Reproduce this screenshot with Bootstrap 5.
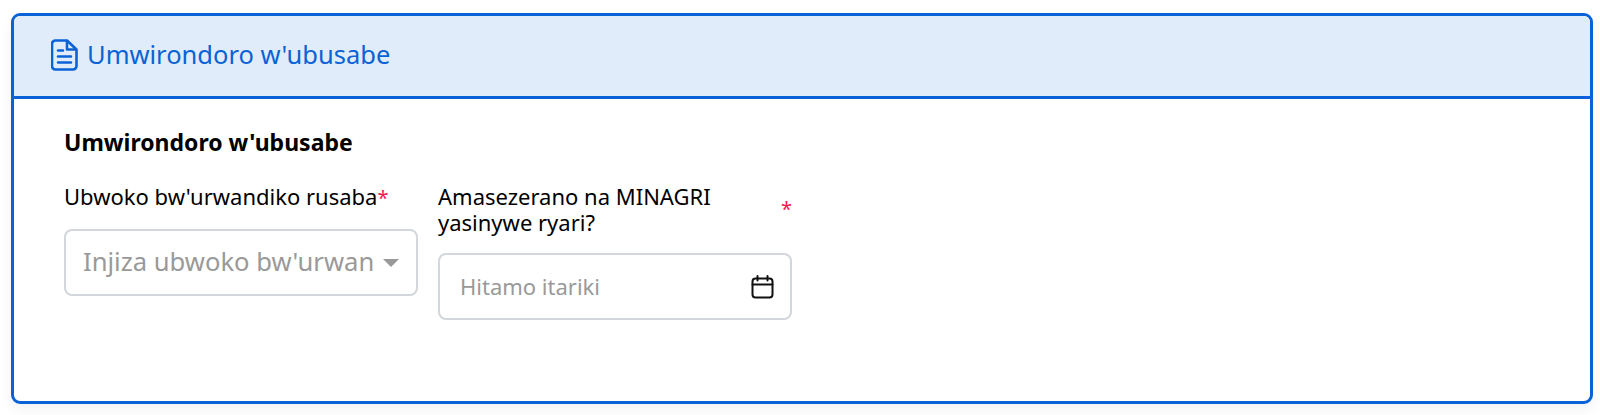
<!DOCTYPE html>
<html lang="en">
<head>
  <meta charset="UTF-8">
  <title>Umwirondoro w'ubusabe</title>
  <link href="https://cdn.jsdelivr.net/npm/bootstrap@5.3.0/dist/css/bootstrap.min.css" rel="stylesheet">
  <style>
    body { background: #fff; font-family: "Noto Sans", "Open Sans", sans-serif; color: #000; overflow: hidden; }
    .page-wrap { padding: 13px 7px 11px 11px; height: 415px; }
    .app-panel { height: 100%; border: 3px solid #0a63d6; border-radius: 9px; overflow: hidden; box-shadow: 0 6px 14px rgba(0,0,0,.05); }
    .app-panel-head { height: 83px; padding: 0 0 3px 37px; background: #e0ecf9; border-bottom: 3px solid #0a63d6; color: #0a63d6; font-size: 25.5px; gap: 9px; }
    .app-panel-body { padding: 28px 50px; }
    .sec-title { font-size: 23px; font-weight: 700; line-height: 30px; margin-bottom: 26px; }
    .field-col { width: 354px; }
    .field-row { column-gap: 20px; }
    .field-label { font-size: 22px; line-height: 26px; margin-bottom: 18px; }
    .field-label-single { margin-bottom: 20px; }
    .label-wrap { width: 310px; }
    .req { color: #f5164f; font-size: 20px; line-height: 20px; }
    .fake-input { height: 67px; border: 2px solid #d3d6da; border-radius: 8px; color: #999; background: #fff; }
    .fake-select { font-size: 25.6px; padding: 0 17px; }
    .fake-date { font-size: 22px; padding: 0 16px 0 20px; }
    .caret-down { width: 0; height: 0; border-left: 8px solid transparent; border-right: 8px solid transparent; border-top: 8px solid #999; }
  </style>
</head>
<body>
  <div class="page-wrap">
    <div class="app-panel">
      <div class="app-panel-head d-flex align-items-center">
        <svg width="27" height="32" viewBox="0 0 27 32" fill="none" stroke="#0a63d6" stroke-width="2.6" stroke-linejoin="round" stroke-linecap="round">
          <path d="M4.5 1.5H16L25.5 10.5V27a3.5 3.5 0 0 1-3.5 3.5H4.5A3.5 3.5 0 0 1 1 27V5a3.5 3.5 0 0 1 3.5-3.5Z"/>
          <path d="M16 2V10.5H25"/>
          <path d="M7 11.5H12M7 17.5H20M7 23.5H20"/>
        </svg>
        <span>Umwirondoro w'ubusabe</span>
      </div>
      <div class="app-panel-body">
        <div class="sec-title">Umwirondoro w'ubusabe</div>
        <div class="field-row d-flex align-items-start">
          <div class="field-col">
            <div class="field-label field-label-single text-nowrap">Ubwoko bw'urwandiko rusaba<span class="req">*</span></div>
            <div class="fake-input fake-select d-flex align-items-center justify-content-between">
              <span class="text-nowrap overflow-hidden">Injiza ubwoko bw'urwan</span>
              <span class="caret-down flex-shrink-0"></span>
            </div>
          </div>
          <div class="field-col">
            <div class="field-label d-flex justify-content-between align-items-center">
              <span class="label-wrap">Amasezerano na MINAGRI yasinywe ryari?</span>
              <span class="req">*</span>
            </div>
            <div class="fake-input fake-date d-flex align-items-center justify-content-between">
              <span>Hitamo itariki</span>
              <svg width="23" height="24" viewBox="0 0 23 24" fill="none" stroke="#111" stroke-width="2" stroke-linecap="round" stroke-linejoin="round">
                <rect x="1.5" y="3.5" width="20" height="19" rx="3"/>
                <path d="M1.5 9.5H21.5M6.5 1V5.5M16.5 1V5.5"/>
              </svg>
            </div>
          </div>
        </div>
      </div>
    </div>
  </div>
  <script src="https://cdn.jsdelivr.net/npm/bootstrap@5.3.0/dist/js/bootstrap.bundle.min.js"></script>
</body>
</html>
